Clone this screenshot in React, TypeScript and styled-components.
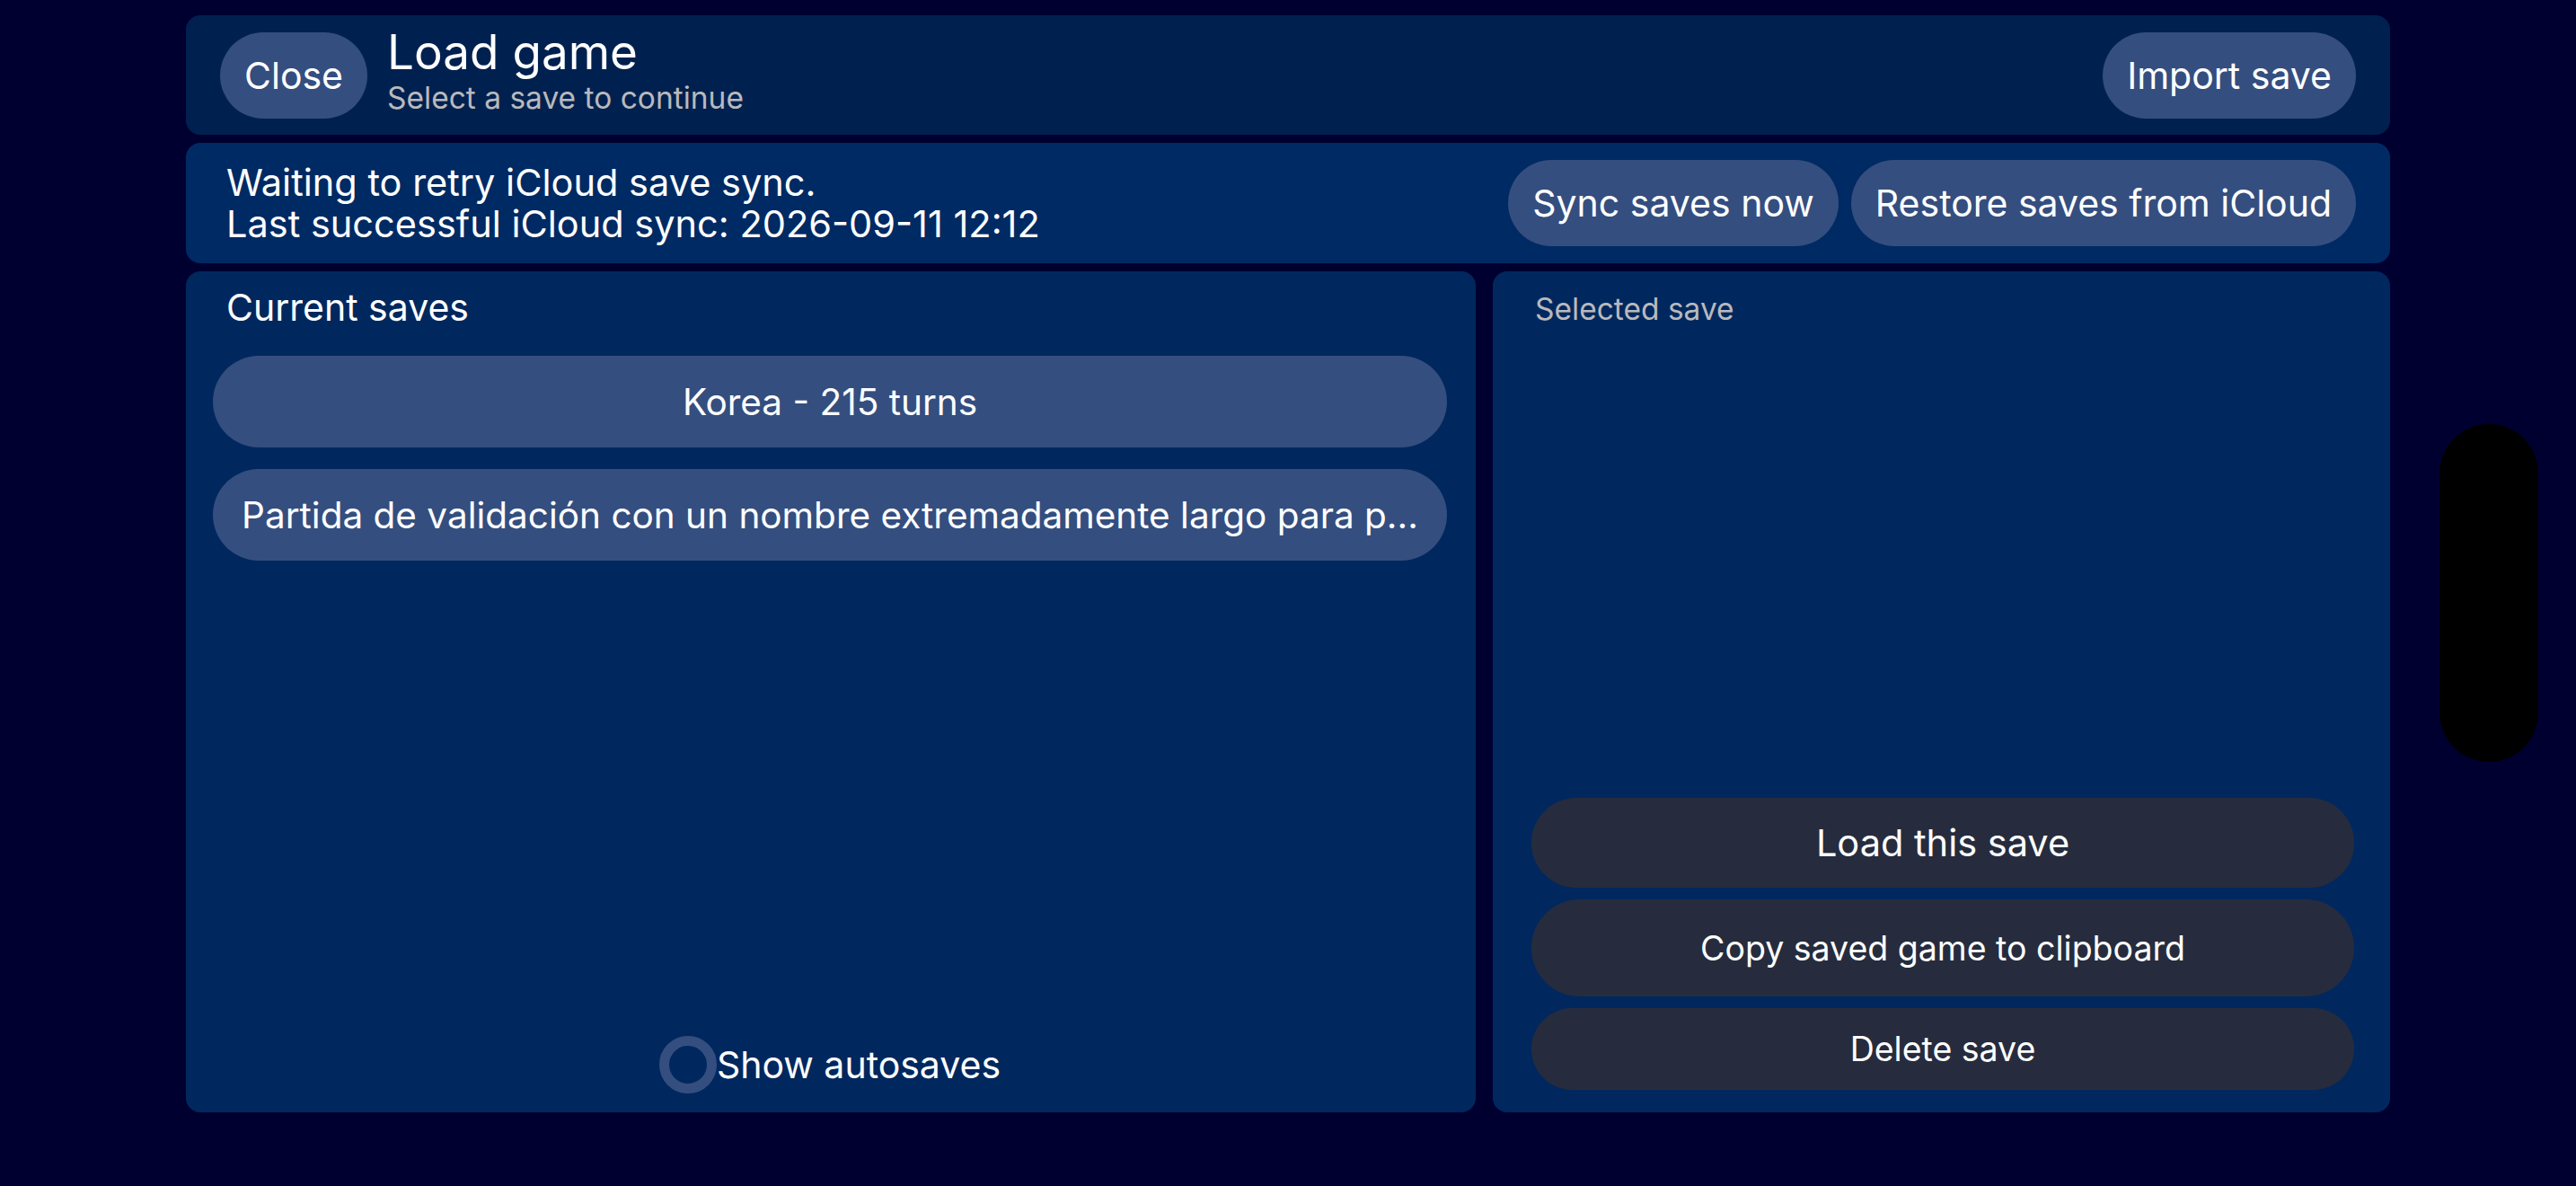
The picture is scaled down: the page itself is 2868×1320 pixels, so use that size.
import React from 'react';
import styled, { createGlobalStyle } from 'styled-components';

const Global = createGlobalStyle`
  html, body { margin: 0; padding: 0; background: #000030; }
  body { font-family: Inter, "Noto Sans", sans-serif; color: #fff; }
  * { box-sizing: border-box; }
`;

const Screen = styled.div`
  position: relative;
  width: 2868px;
  height: 1320px;
  background: #000030;
  padding: 17px 207px 82px;
  display: flex;
  flex-direction: column;
  gap: 9px;
  overflow: hidden;
  font-family: Inter, "Noto Sans", sans-serif;
`;

const Header = styled.header`
  flex: 0 0 133px;
  background: #00214f;
  border-radius: 16px;
  display: flex;
  align-items: center;
  padding: 0 38px;
  gap: 22px;
`;

const TitleBlock = styled.div`
  display: flex;
  flex-direction: column;
  padding-bottom: 10px;
  flex: 1;
`;

const Title = styled.h1`
  margin: 0;
  font-size: 53px;
  line-height: 62px;
  font-weight: 400;
  color: #fff;
`;

const Subtitle = styled.div`
  font-size: 33.5px;
  line-height: 1.2;
  color: #b9b9bd;
`;

const PillButton = styled.button`
  height: 96px;
  padding: 0 27px;
  border: none;
  border-radius: 48px;
  background: #344e7f;
  color: #fff;
  font-family: Inter, "Noto Sans", sans-serif;
  font-size: 41px;
  white-space: nowrap;
  flex: 0 0 auto;
`;

const SyncBar = styled.section`
  flex: 0 0 134px;
  background: #002a63;
  border-radius: 16px;
  display: flex;
  align-items: center;
  padding: 0 38px 0 45px;
  gap: 14px;
`;

const SyncText = styled.div`
  flex: 1;
  font-size: 41.5px;
  line-height: 46px;
  color: #fff;
  white-space: nowrap;
`;

const Main = styled.div`
  flex: 1;
  display: grid;
  grid-template-columns: minmax(0, 1436fr) minmax(0, 999fr);
  gap: 19px;
  min-height: 0;
`;

const Panel = styled.section<{ $pad: string }>`
  background: #00285e;
  border-radius: 16px;
  display: flex;
  flex-direction: column;
  padding: ${(p) => p.$pad};
  min-height: 0;
  min-width: 0;
`;

const SectionTitle = styled.h2`
  margin: 0 0 29px;
  padding-left: 15px;
  font-size: 41px;
  line-height: 1.2;
  font-weight: 400;
  color: #fff;
`;

const SaveList = styled.div`
  display: flex;
  flex-direction: column;
  gap: 24px;
  min-width: 0;
`;

const SaveItem = styled.button`
  height: 102px;
  min-width: 0;
  width: 100%;
  border: none;
  border-radius: 51px;
  background: #344e7f;
  color: #fff;
  font-family: Inter, "Noto Sans", sans-serif;
  font-size: 40.5px;
  padding: 0 22px;
  white-space: nowrap;
  overflow: hidden;
  text-overflow: ellipsis;
  text-align: center;
`;

const ToggleRow = styled.label`
  margin-top: auto;
  align-self: center;
  display: flex;
  align-items: center;
  font-size: 41px;
  color: #fff;
`;

const Radio = styled.span`
  width: 64px;
  height: 64px;
  border-radius: 50%;
  border: 11px solid #344e7f;
  flex: 0 0 auto;
`;

const DetailLabel = styled.div`
  padding-left: 4px;
  font-size: 33.5px;
  line-height: 1.2;
  color: #b9b9bd;
`;

const ActionStack = styled.div`
  margin-top: auto;
  display: flex;
  flex-direction: column;
  gap: 13px;
`;

const ActionButton = styled.button<{ $h: number; $size: number }>`
  height: ${(p) => p.$h}px;
  border: none;
  border-radius: ${(p) => p.$h / 2}px;
  background: #262c3e;
  color: #fff;
  font-family: Inter, "Noto Sans", sans-serif;
  font-size: ${(p) => p.$size}px;
  white-space: nowrap;
`;

const Island = styled.div`
  position: absolute;
  left: 2716px;
  top: 472px;
  width: 110px;
  height: 376px;
  border-radius: 55px;
  background: #000;
`;

export default function App() {
  return (
    <Screen>
      <Global />
      <Header>
        <PillButton>Close</PillButton>
        <TitleBlock>
          <Title>Load game</Title>
          <Subtitle>Select a save to continue</Subtitle>
        </TitleBlock>
        <PillButton>Import save</PillButton>
      </Header>
      <SyncBar>
        <SyncText>
          Waiting to retry iCloud save sync.
          <br />
          Last successful iCloud sync: 2026-09-11 12:12
        </SyncText>
        <PillButton>Sync saves now</PillButton>
        <PillButton>Restore saves from iCloud</PillButton>
      </SyncBar>
      <Main>
        <Panel $pad="16px 32px 21px 30px">
          <SectionTitle>Current saves</SectionTitle>
          <SaveList>
            <SaveItem>Korea - 215 turns</SaveItem>
            <SaveItem>Partida de validación con un nombre extremadamente largo para p...</SaveItem>
          </SaveList>
          <ToggleRow>
            <Radio />
            Show autosaves
          </ToggleRow>
        </Panel>
        <Panel $pad="22px 40px 25px 43px">
          <DetailLabel>Selected save</DetailLabel>
          <ActionStack>
            <ActionButton $h={100} $size={41.5}>Load this save</ActionButton>
            <ActionButton $h={108} $size={37.5}>Copy saved game to clipboard</ActionButton>
            <ActionButton $h={91} $size={37.5}>Delete save</ActionButton>
          </ActionStack>
        </Panel>
      </Main>
      <Island />
    </Screen>
  );
}
